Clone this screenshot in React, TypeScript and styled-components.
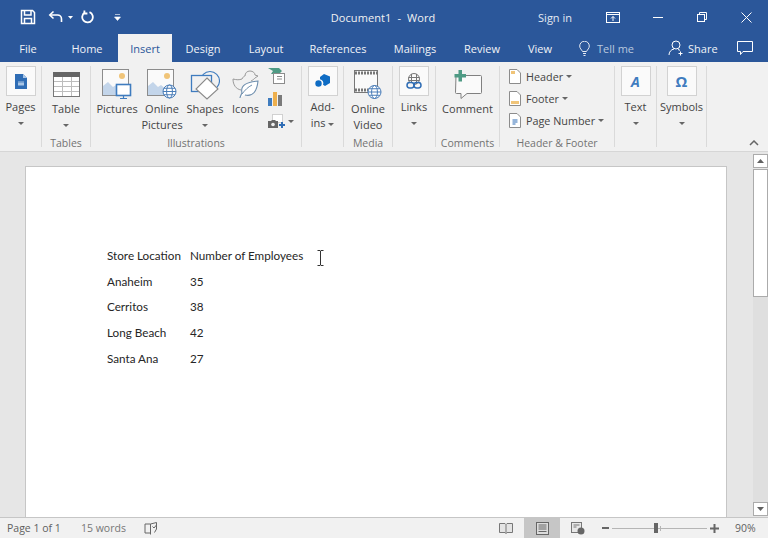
import styled, { createGlobalStyle } from "styled-components";
import { Fragment } from "react";
import type { ReactNode } from "react";

const Global = createGlobalStyle`
  html, body {
    margin: 0;
    padding: 0;
    background: #e6e6e6;
  }
  * {
    box-sizing: border-box;
  }
`;

const Window = styled.div`
  width: 768px;
  height: 538px;
  display: flex;
  flex-direction: column;
  overflow: hidden;
  position: relative;
  font-family: "Open Sans", "Noto Sans", sans-serif;
  font-size: 11px;
  color: #444;
`;

const TitleBar = styled.div`
  height: 34px;
  flex: none;
  background: #2b579a;
  color: #fff;
  display: grid;
  grid-template-columns: 1fr auto 1fr;
  align-items: center;
`;

const Quick = styled.div`
  display: flex;
  align-items: center;
  padding-left: 20px;
`;

const Spacer = styled.span<{ $w: number }>`
  width: ${(p) => p.$w}px;
`;

const Title = styled.div`
  font-size: 11px;
  letter-spacing: 0.1px;
  padding-right: 2px;
  color: #f2f2f2;
  white-space: pre;
`;

const Controls = styled.div`
  display: flex;
  align-items: center;
  justify-content: flex-end;
`;

const SignIn = styled.span`
  color: #e3e9f3;
  margin-right: 19px;
`;

const WinBtn = styled.span<{ $w: number }>`
  width: ${(p) => p.$w}px;
  flex: none;
  display: flex;
  align-items: center;
  justify-content: center;
`;

const TabRow = styled.div`
  height: 28px;
  flex: none;
  background: #2b579a;
  display: flex;
  align-items: stretch;
`;

const Tab = styled.div<{ $w: number; $active?: boolean }>`
  width: ${(p) => p.$w}px;
  flex: none;
  display: flex;
  align-items: center;
  justify-content: center;
  background: ${(p) => (p.$active ? "#f1f1f1" : "transparent")};
  color: ${(p) => (p.$active ? "#2b579a" : "#f0f3f8")};
`;

const TellMe = styled.div`
  flex: none;
  display: flex;
  align-items: center;
  gap: 7px;
  margin-left: 11px;
  color: #b9c8de;
  width: 88px;
`;

const Share = styled.div`
  flex: none;
  display: flex;
  align-items: center;
  gap: 4px;
  color: #f0f3f8;
  width: 62px;
  padding-left: 1px;
`;

const Ribbon = styled.div`
  height: 90px;
  flex: none;
  background: #f1f1f1;
  border-bottom: 1px solid #d6d6d6;
  display: flex;
  padding: 4px 0;
`;

const Group = styled.div<{ $w: number }>`
  width: ${(p) => p.$w}px;
  flex: none;
  border-right: 1px solid #dadada;
  display: flex;
  flex-direction: column;
`;

const GroupBody = styled.div<{ $pad?: number }>`
  flex: 1;
  display: flex;
  padding-left: ${(p) => p.$pad ?? 0}px;
`;

const GroupLabel = styled.div`
  height: 14px;
  line-height: 14px;
  margin-bottom: -3px;
  font-size: 10.5px;
  text-align: center;
  color: #737373;
`;

const Tool = styled.div<{ $w?: number }>`
  width: ${(p) => (p.$w ? `${p.$w}px` : "100%")};
  display: flex;
  flex-direction: column;
  align-items: center;
`;

const IconSlot = styled.div<{ $boxed?: boolean }>`
  height: ${(p) => (p.$boxed ? 33 : 35)}px;
  display: flex;
  justify-content: center;
  align-items: ${(p) => (p.$boxed ? "flex-start" : "center")};
  padding-top: ${(p) => (p.$boxed ? 0 : 2)}px;
`;

const IconBox = styled.div`
  width: 30px;
  height: 30px;
  background: #fafafa;
  border: 1px solid #d2d2d2;
  display: flex;
  align-items: center;
  justify-content: center;
`;

const TextGlyph = styled.span`
  color: #3f7cbf;
  font-style: italic;
  font-weight: 700;
  font-size: 14px;
`;

const OmegaGlyph = styled.span`
  color: #3f7cbf;
  font-weight: 700;
  font-size: 15px;
`;

const ToolLabel = styled.div`
  line-height: 16px;
  font-size: 11px;
  text-align: center;
  white-space: nowrap;
  color: #444;
`;

const CaretShape = styled.span`
  display: inline-block;
  width: 0;
  height: 0;
  border-left: 3px solid transparent;
  border-right: 3px solid transparent;
  border-top: 3px solid #666;
  vertical-align: middle;
`;

const CaretLine = styled.div`
  height: 16px;
  display: flex;
  align-items: center;
  justify-content: center;
`;

const SmallStack = styled.div`
  display: flex;
  flex-direction: column;
  gap: 6px;
  padding: 1px 0 0 2px;
`;

const SmallRow = styled.div`
  height: 17px;
  display: flex;
  align-items: center;
  gap: 3px;
`;

const MenuStack = styled.div`
  display: flex;
  flex-direction: column;
  gap: 2px;
  padding-left: 9px;
`;

const MenuRow = styled.div`
  height: 20px;
  display: flex;
  align-items: center;
  gap: 3px;
  white-space: nowrap;
  font-size: 10.8px;

  svg {
    margin-right: 2px;
  }
`;

const Collapse = styled.div`
  margin-left: auto;
  align-self: flex-end;
  padding-right: 9px;
  height: 14px;
  margin-bottom: -3px;
  display: flex;
  align-items: center;
`;

const DocArea = styled.div`
  flex: 1;
  min-height: 0;
  background: #e6e6e6;
  display: flex;
  padding-left: 25px;
`;

const Page = styled.div`
  width: 702px;
  margin-top: 14px;
  background: #fff;
  border: 1px solid #c6c6c6;
  border-bottom: none;
  padding: 75px 0 0 81px;
  position: relative;
  font-family: Lato, "Liberation Sans", sans-serif;
  font-size: 11.7px;
  color: #262626;
`;

const DataGrid = styled.div`
  display: grid;
  grid-template-columns: 83px auto;
  grid-auto-rows: 25.8px;
  align-items: center;
`;

const Cursor = styled.svg`
  position: absolute;
  left: 291px;
  top: 83px;
`;

const ScrollBar = styled.div`
  width: 15px;
  margin-left: 26px;
  padding-top: 2px;
  display: flex;
  flex-direction: column;
  padding-bottom: 1px;
`;

const ScrollBtn = styled.div`
  height: 14px;
  flex: none;
  background: #fff;
  border: 1px solid #ababab;
  display: flex;
  align-items: center;
  justify-content: center;
`;

const Thumb = styled.div`
  height: 128px;
  flex: none;
  margin-top: 1px;
  background: #fff;
  border: 1px solid #ababab;
`;

const Track = styled.div`
  flex: 1;
  background: #dfdfdf;
`;

const StatusBar = styled.div`
  height: 21px;
  flex: none;
  background: #f1f1f1;
  border-top: 1px solid #c6c6c6;
  display: flex;
  align-items: stretch;
  font-size: 10.5px;
  color: #5f5f5f;
`;

const StatusText = styled.span<{ $w: number; $light?: boolean }>`
  width: ${(p) => p.$w}px;
  display: flex;
  align-items: center;
  color: ${(p) => (p.$light ? "#767676" : "#5f5f5f")};
`;

const StatusLeft = styled.div`
  flex: 1;
  display: flex;
  padding-left: 7px;
`;

const ViewBtn = styled.div<{ $active?: boolean }>`
  width: 36px;
  flex: none;
  display: flex;
  align-items: center;
  justify-content: center;
  background: ${(p) => (p.$active ? "#c6c6c6" : "transparent")};
`;

const Zoomer = styled.div`
  width: 139px;
  flex: none;
  padding-left: 6px;
  display: flex;
  align-items: center;
  gap: 3px;
`;

const SlideTrack = styled.div`
  width: 95px;
  height: 1px;
  background: #b5b5b5;
  display: flex;
  align-items: center;
  padding-left: 42px;
`;

const SlideThumb = styled.div`
  width: 4px;
  height: 10px;
  flex: none;
  background: #666;
`;

const SlideTick = styled.div`
  width: 1px;
  height: 5px;
  margin-left: 2px;
  background: #b5b5b5;
`;

const Percent = styled.div`
  width: 33px;
  flex: none;
  display: flex;
  align-items: center;
`;

const Caret = () => <CaretShape />;

const SaveIcon = () => (
  <svg width="16" height="16" viewBox="0 0 16 16" fill="none" stroke="#fff" strokeWidth="1.5">
    <path d="M1.5 1.500h11l2 2v11h-13z" />
    <path d="M4.500 1.500v4.500h6.500v-4.500" />
    <path d="M4.500 14.500v-5h7v5" />
  </svg>
);

const UndoIcon = () => (
  <svg width="16" height="14" viewBox="0 0 16 14" fill="none" stroke="#fff" strokeWidth="1.6">
    <path d="M5.500 1.500 1.800 5l3.700 3.500" />
    <path d="M2 5h7.500a4 4 0 0 1 4 4v3" />
  </svg>
);

const RepeatIcon = () => (
  <svg width="14" height="14" viewBox="0 0 14 14" fill="none" stroke="#fff" strokeWidth="1.8">
    <path d="M8.500 2.200a5.300 5.300 0 1 1-4.600.3" />
    <path d="M3.400 0.500v3h3" />
  </svg>
);

const PagesIcon = () => (
  <svg width="12" height="15" viewBox="0 0 12 15">
    <path d="M0 0h8l4 4v11H0z" fill="#2f6db5" />
    <path d="M8 0l4 4H8z" fill="#a9c6e6" />
    <path d="M3 8.500h6v3H3z" fill="#a9c6e6" />
    <path d="M3.500 7.800h5" stroke="#dce8f5" strokeDasharray="1 1" />
  </svg>
);

const TableIcon = () => (
  <svg width="27" height="25" viewBox="0 0 27 25">
    <rect x="0.500" y="0.500" width="26" height="24" fill="#fff" stroke="#777" />
    <rect x="0" y="0" width="27" height="5" fill="#666" />
    <path d="M9.500 5v19M18.500 5v19M1 9.500h25M1 14.500h25M1 19.500h25" stroke="#bdbdbd" fill="none" />
  </svg>
);

const Globe = ({ x, y, r }: { x: number; y: number; r: number }) => (
  <g fill="#fff" stroke="#4a7db8" strokeWidth="1">
    <circle cx={x} cy={y} r={r} />
    <ellipse cx={x} cy={y} rx={r * 0.45} ry={r} fill="none" />
    <path d={`M${x - r} ${y}h${r * 2}M${x - r + 1} ${y - r / 2}h${r * 2 - 2}M${x - r + 1} ${y + r / 2}h${r * 2 - 2}`} fill="none" />
  </g>
);

const PictureBase = () => (
  <>
    <rect x="0.500" y="0.500" width="26" height="26" fill="#fafafa" stroke="#8c8c8c" />
    <circle cx="20" cy="7" r="3" fill="#f0c478" />
    <path d="M1 26V17l5-4 5 5 3-2 6 5v5z" fill="#c3d5ea" />
  </>
);

const PicturesIcon = () => (
  <svg width="30" height="31" viewBox="0 0 30 31">
    <PictureBase />
    <rect x="14.500" y="15.500" width="14" height="11" fill="#fff" stroke="#3f7cbf" strokeWidth="1.6" />
    <path d="M21.500 27v2M18 29.500h7" stroke="#3f7cbf" strokeWidth="1.2" />
  </svg>
);

const OnlinePicturesIcon = () => (
  <svg width="30" height="31" viewBox="0 0 30 31">
    <PictureBase />
    <Globe x={22.5} y={22.5} r={6.5} />
  </svg>
);

const ShapesIcon = () => (
  <svg width="30" height="30" viewBox="0 0 30 30" fill="none">
    <circle cx="20" cy="11" r="9.500" stroke="#3f7cbf" strokeWidth="1.1" />
    <rect x="1.500" y="5.500" width="20" height="16" fill="#f1f1f1" stroke="#3f7cbf" strokeWidth="1.3" />
    <path d="M17 8 28 19 17 29 6 19z" fill="#fff" stroke="#8a8a8a" strokeWidth="1.1" />
  </svg>
);

const IconsIcon = () => (
  <svg width="28" height="30" viewBox="0 0 28 30" fill="none">
    <path
      d="M1 9c4 1 6 1 9 0 1-2 2-3 3-3 0-3 2-5 5-5s5 2 5 4l3 1-3 2c-1 1-2 2-4 3"
      stroke="#9a9a9a"
      strokeWidth="1"
    />
    <path d="M1 9c0 6 3 10 8 11" stroke="#9a9a9a" strokeWidth="1" />
    <path
      d="M8 28c0-1 1-3 2-5-2-8 5-11 16-12-1 10-5 16-13 14"
      fill="#fff"
      stroke="#6f8fae"
      strokeWidth="1.1"
    />
    <path d="M10 24c3-4 6-7 10-9" stroke="#6f8fae" strokeWidth="1" />
  </svg>
);

const SmartArtIcon = () => (
  <svg width="17" height="16" viewBox="0 0 17 16">
    <path d="M0 0h11l3 3-3 3H3l2-3z" fill="#4e9a84" />
    <rect x="5.500" y="5.500" width="11" height="10" fill="#fff" stroke="#8c8c8c" />
    <path d="M9 8.500h5M9 11h5" stroke="#8c8c8c" />
  </svg>
);

const ChartIcon = () => (
  <svg width="15" height="14" viewBox="0 0 15 14">
    <rect x="0" y="6" width="4" height="8" fill="#3f7cbf" />
    <rect x="5" y="0" width="4" height="14" fill="#eeb04e" />
    <rect x="10" y="3" width="4" height="11" fill="#7a7a7a" />
  </svg>
);

const ScreenshotIcon = () => (
  <svg width="17" height="15" viewBox="0 0 17 15">
    <rect x="4.500" y="0.500" width="10" height="8" fill="#fff" stroke="#aaa" strokeDasharray="1 1" />
    <path d="M0 7h3l1-1h3l1 1h2v7H0z" fill="#666" />
    <circle cx="5" cy="10.500" r="1.800" fill="#f1f1f1" />
    <path d="M11 11h6M14 8v6" stroke="#2f6db5" strokeWidth="2" />
  </svg>
);

const AddinsIcon = () => (
  <svg width="16" height="14" viewBox="0 0 16 14">
    <path d="M9 0l6 2.500v6.500l-5 3-2-1.200A4 4 0 0 0 5 5.200V3z" fill="#0f6cc4" />
    <circle cx="3.500" cy="9.500" r="3.200" fill="#0f6cc4" />
  </svg>
);

const VideoIcon = () => (
  <svg width="28" height="30" viewBox="0 0 28 30">
    <rect x="0.500" y="0.500" width="23" height="22" fill="#fafafa" stroke="#777" />
    <path d="M1 3h22M1 20h22" stroke="#777" strokeWidth="3" strokeDasharray="2 1" />
    <Globe x={20.5} y={22} r={6.5} />
  </svg>
);

const LinksIcon = () => (
  <svg width="16" height="17" viewBox="0 0 16 17" fill="none">
    <circle cx="8" cy="6" r="5.500" stroke="#777" />
    <path d="M5.500 1v10M10.500 1v10M2.500 4.500h11M2.500 7.500h11" stroke="#777" />
    <rect x="1" y="9.500" width="7" height="5.500" rx="2.700" fill="#f5f5f5" stroke="#2f6db5" strokeWidth="1.5" />
    <rect x="8" y="9.500" width="7" height="5.500" rx="2.700" stroke="#2f6db5" strokeWidth="1.5" />
  </svg>
);

const CommentIcon = () => (
  <svg width="30" height="29" viewBox="0 0 30 29" fill="none">
    <path
      d="M3 5.500h24.500a1 1 0 0 1 1 1v16a1 1 0 0 1-1 1H14l-6 5v-5H3.500a1 1 0 0 1-1-1z"
      fill="#fafafa"
      stroke="#808080"
    />
    <path d="M5.500 0h3.500v4h4v3.500h-4v4H5.500v-4h-4V4h4z" fill="#4e9a84" />
  </svg>
);

const DocSmallIcon = ({ mark }: { mark: "header" | "footer" | "number" }) => (
  <svg width="12" height="15" viewBox="0 0 12 15">
    <path d="M0.500 0.500h7.500l3.500 3.500v10.500H0.500z" fill="#fff" stroke="#8c8c8c" />
    {mark === "header" && <rect x="2" y="2" width="4" height="3" fill="#f0c478" />}
    {mark === "footer" && <rect x="2" y="10" width="8" height="3" fill="#f0c478" />}
    {mark === "number" && <path d="M3.500 7h5M3.500 9h5M3.500 11h3" stroke="#2f6db5" strokeWidth="1.200" />}
  </svg>
);

const BookIcon = () => (
  <svg width="14" height="13" viewBox="0 0 14 13" fill="none" stroke="#777">
    <path d="M0.500 1.500h5.500l1 1 1-1h5.500v9H8l-1 1-1-1H0.500z" fill="#e4e4e4" />
    <path d="M7 2.500v9" />
  </svg>
);

const ProofIcon = () => (
  <svg width="14" height="13" viewBox="0 0 14 13" fill="none" stroke="#666">
    <path d="M6.500 2H1v9h5.500M6.500 2v10.500M6.500 2l6-1.500V7l-2 3.500" />
    <path d="M8.500 4.500l1.500 1.500 2.500-3" />
  </svg>
);

const PrintIcon = () => (
  <svg width="13" height="13" viewBox="0 0 13 13" fill="none" stroke="#666">
    <rect x="0.500" y="0.500" width="12" height="12" fill="#dcdcdc" />
    <path d="M2.500 3h8M2.500 5h8M2.500 7h8M2.500 9.500h8" />
  </svg>
);

const WebIcon = () => (
  <svg width="14" height="13" viewBox="0 0 14 13" fill="none" stroke="#777">
    <rect x="0.500" y="0.500" width="10" height="10" fill="#e8e8e8" />
    <path d="M2.500 3h6M2.500 5h3" />
    <circle cx="10" cy="9" r="3.500" fill="#666" stroke="none" />
  </svg>
);

type ToolProps = {
  w?: number;
  boxed?: boolean;
  icon: ReactNode;
  lines: string[];
  caret?: boolean;
};

const RibbonTool = ({ w, boxed, icon, lines, caret }: ToolProps) => (
  <Tool $w={w}>
    <IconSlot $boxed={boxed}>{boxed ? <IconBox>{icon}</IconBox> : icon}</IconSlot>
    {lines.map((l) => (
      <ToolLabel key={l}>{l}</ToolLabel>
    ))}
    {caret && (
      <CaretLine>
        <Caret />
      </CaretLine>
    )}
  </Tool>
);

const tabs = [
  { name: "File", w: 56 },
  { name: "Home", w: 62 },
  { name: "Insert", w: 54, active: true },
  { name: "Design", w: 62 },
  { name: "Layout", w: 64 },
  { name: "References", w: 80 },
  { name: "Mailings", w: 74 },
  { name: "Review", w: 60 },
  { name: "View", w: 56 },
];

const rows = [
  ["Store Location", "Number of Employees"],
  ["Anaheim", "35"],
  ["Cerritos", "38"],
  ["Long Beach", "42"],
  ["Santa Ana", "27"],
];

export default function App() {
  return (
    <Window>
      <Global />
      <TitleBar>
        <Quick>
          <SaveIcon />
          <Spacer $w={12} />
          <UndoIcon />
          <Spacer $w={4} />
          <svg width="5" height="3" viewBox="0 0 5 3"><path d="M0 0h5L2.500 3z" fill="#fff" /></svg>
          <Spacer $w={8} />
          <RepeatIcon />
          <Spacer $w={19} />
          <svg width="7" height="7" viewBox="0 0 7 7"><path d="M1 0.500h5M0.500 3h6l-3 3.500z" stroke="#fff" fill="#fff" strokeWidth="0.600" /></svg>
        </Quick>
        <Title>Document1  -  Word</Title>
        <Controls>
          <SignIn>Sign in</SignIn>
          <WinBtn $w={44}>
            <svg width="14" height="11" viewBox="0 0 14 11" fill="none" stroke="#fff"><rect x="0.500" y="0.500" width="13" height="10" /><path d="M0.500 2.500h13" /><path d="M7 9V4.500M5 6.500l2-2 2 2" /></svg>
          </WinBtn>
          <WinBtn $w={45}>
            <svg width="10" height="1" viewBox="0 0 10 1"><path d="M0 0.500h10" stroke="#fff" /></svg>
          </WinBtn>
          <WinBtn $w={44}>
            <svg width="10" height="10" viewBox="0 0 10 10" fill="none" stroke="#fff"><rect x="0.500" y="2.500" width="7" height="7" /><path d="M2.500 2.500v-2h7v7h-2" /></svg>
          </WinBtn>
          <WinBtn $w={44}>
            <svg width="11" height="11" viewBox="0 0 11 11" stroke="#fff"><path d="M0.500 0.500l10 10M10.500 0.500l-10 10" /></svg>
          </WinBtn>
        </Controls>
      </TitleBar>

      <TabRow>
        {tabs.map((t) => (
          <Tab key={t.name} $w={t.w} $active={t.active}>
            {t.name}
          </Tab>
        ))}
        <TellMe>
          <svg width="11" height="15" viewBox="0 0 11 15" fill="none" stroke="#e6ebf3"><path d="M3.500 10.500C2.500 8.500 0.700 7.500 0.700 5a4.800 4.800 0 0 1 9.600 0c0 2.500-1.800 3.500-2.800 5.500z" /><path d="M4 12.500h3M4.500 14.500h2" /></svg>
          <span>Tell me</span>
        </TellMe>
        <Share>
          <svg width="16" height="16" viewBox="0 0 16 16" fill="none" stroke="#fff"><circle cx="8" cy="5" r="4" /><path d="M1 15c0-3 2-5.500 5-6M10 9.500l2 .8" /><path d="M12.500 11.500v4M10.500 13.500h4" /></svg>
          <span>Share</span>
        </Share>
        <WinBtn $w={32}>
          <svg width="16" height="15" viewBox="0 0 16 15" fill="none" stroke="#fff"><path d="M0.500 0.500h15v10H6L3.500 13.500v-3h-3z" /></svg>
        </WinBtn>
      </TabRow>

      <Ribbon>
        <Group $w={42}>
          <GroupBody $pad={5}>
            <RibbonTool w={31} boxed icon={<PagesIcon />} lines={["Pages"]} caret />
          </GroupBody>
        </Group>
        <Group $w={49}>
          <GroupBody>
            <RibbonTool icon={<TableIcon />} lines={["Table"]} caret />
          </GroupBody>
          <GroupLabel>Tables</GroupLabel>
        </Group>
        <Group $w={211}>
          <GroupBody $pad={4}>
            <RibbonTool w={44} icon={<PicturesIcon />} lines={["Pictures"]} />
            <RibbonTool w={46} icon={<OnlinePicturesIcon />} lines={["Online", "Pictures"]} />
            <RibbonTool w={40} icon={<ShapesIcon />} lines={["Shapes"]} caret />
            <RibbonTool w={41} icon={<IconsIcon />} lines={["Icons"]} />
            <SmallStack>
              <SmallRow><SmartArtIcon /></SmallRow>
              <SmallRow><ChartIcon /></SmallRow>
              <SmallRow><ScreenshotIcon /><Caret /></SmallRow>
            </SmallStack>
          </GroupBody>
          <GroupLabel>Illustrations</GroupLabel>
        </Group>
        <Group $w={42}>
          <GroupBody>
            <Tool>
              <IconSlot $boxed><IconBox><AddinsIcon /></IconBox></IconSlot>
              <ToolLabel>Add-</ToolLabel>
              <ToolLabel>ins <Caret /></ToolLabel>
            </Tool>
          </GroupBody>
        </Group>
        <Group $w={49}>
          <GroupBody>
            <RibbonTool icon={<VideoIcon />} lines={["Online", "Video"]} />
          </GroupBody>
          <GroupLabel>Media</GroupLabel>
        </Group>
        <Group $w={43}>
          <GroupBody>
            <RibbonTool boxed icon={<LinksIcon />} lines={["Links"]} caret />
          </GroupBody>
        </Group>
        <Group $w={64}>
          <GroupBody>
            <RibbonTool icon={<CommentIcon />} lines={["Comment"]} />
          </GroupBody>
          <GroupLabel>Comments</GroupLabel>
        </Group>
        <Group $w={115}>
          <GroupBody>
            <MenuStack>
              <MenuRow><DocSmallIcon mark="header" /><span>Header</span><Caret /></MenuRow>
              <MenuRow><DocSmallIcon mark="footer" /><span>Footer</span><Caret /></MenuRow>
              <MenuRow><DocSmallIcon mark="number" /><span>Page Number</span><Caret /></MenuRow>
            </MenuStack>
          </GroupBody>
          <GroupLabel>Header &amp; Footer</GroupLabel>
        </Group>
        <Group $w={42}>
          <GroupBody>
            <RibbonTool boxed icon={<TextGlyph>A</TextGlyph>} lines={["Text"]} caret />
          </GroupBody>
        </Group>
        <Group $w={50}>
          <GroupBody>
            <RibbonTool boxed icon={<OmegaGlyph>Ω</OmegaGlyph>} lines={["Symbols"]} caret />
          </GroupBody>
        </Group>
        <Collapse>
          <svg width="10" height="6" viewBox="0 0 10 6" fill="none" stroke="#666" strokeWidth="1.500"><path d="M1 5l4-4 4 4" /></svg>
        </Collapse>
      </Ribbon>

      <DocArea>
        <Page>
          <DataGrid>
            {rows.map((r) => (
              <Fragment key={r[0]}>
                <span>{r[0]}</span>
                <span>{r[1]}</span>
              </Fragment>
            ))}
          </DataGrid>
          <Cursor width="7" height="16" viewBox="0 0 7 16" fill="none" stroke="#333">
            <path d="M0.500 0.500h2.500l0.500 0.500 0.500-0.500h2.500M3.500 1v14M0.500 15.500h2.500l0.500-0.500 0.500 0.500h2.500" />
          </Cursor>
        </Page>
        <ScrollBar>
          <ScrollBtn>
            <svg width="7" height="4" viewBox="0 0 7 4"><path d="M3.500 0 7 4H0z" fill="#606060" /></svg>
          </ScrollBtn>
          <Thumb />
          <Track />
          <ScrollBtn>
            <svg width="7" height="4" viewBox="0 0 7 4"><path d="M0 0h7L3.500 4z" fill="#606060" /></svg>
          </ScrollBtn>
        </ScrollBar>
      </DocArea>

      <StatusBar>
        <StatusLeft>
          <StatusText $w={74}>Page 1 of 1</StatusText>
          <StatusText $w={63} $light>15 words</StatusText>
          <StatusText $w={20}><ProofIcon /></StatusText>
        </StatusLeft>
        <ViewBtn><BookIcon /></ViewBtn>
        <ViewBtn $active><PrintIcon /></ViewBtn>
        <ViewBtn><WebIcon /></ViewBtn>
        <Zoomer>
          <svg width="7" height="2" viewBox="0 0 7 2"><path d="M0 0h7v2H0z" fill="#666" /></svg>
          <SlideTrack><SlideThumb /><SlideTick /></SlideTrack>
          <svg width="9" height="9" viewBox="0 0 9 9"><path d="M0 3.500h9v2H0zM3.500 0h2v9h-2z" fill="#666" /></svg>
        </Zoomer>
        <Percent>90%</Percent>
      </StatusBar>
    </Window>
  );
}
